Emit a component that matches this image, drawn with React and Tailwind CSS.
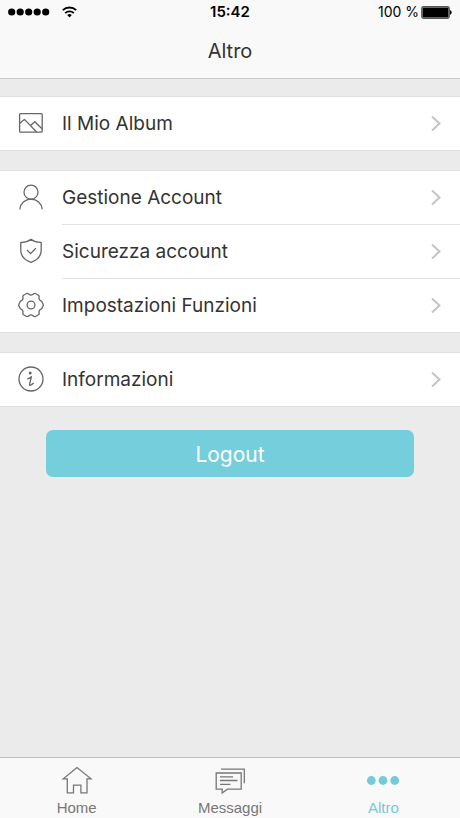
const iconProps = {
  width: 26,
  height: 26,
  viewBox: "0 0 26 26",
  fill: "none",
  stroke: "currentColor",
  strokeWidth: 1.3,
  strokeLinejoin: "round",
  "aria-hidden": true,
};

const AlbumIcon = () => (
  <svg {...iconProps}>
    <rect x="1.6" y="3.6" width="22.6" height="18.6" rx="1" />
    <path d="M1.8 13.2 6.4 9.4 18.6 22M12.6 15.4l4.2-3.6 7.2 7" />
  </svg>
);

const UserIcon = () => (
  <svg {...iconProps}>
    <circle cx="13" cy="8.2" r="7" />
    <path d="M1.7 25.4C2.4 19.2 7 15.2 13 15.2s10.6 4 11.3 10.2" />
  </svg>
);

const ShieldIcon = () => (
  <svg {...iconProps}>
    <path d="M13 1.3C10.2 3.5 6.5 4.6 2.8 4.4v7.8c0 6 3.8 9.9 10.2 12.2 6.4-2.3 10.2-6.2 10.2-12.2V4.4C19.5 4.6 15.8 3.5 13 1.3Z" />
    <path d="m9 12 3.6 3.6 5.2-5.4" />
  </svg>
);

const GearIcon = () => (
  <svg {...iconProps}>
    <path d="M5.6 3.2 8.6 1.5C9.6 1 10.3 1.5 11 2.2 12.2 3.3 13.8 3.3 15 2.2 15.7 1.5 16.4 1 17.4 1.5L20.4 3.2C21.2 3.7 21.3 4.4 21.1 5.3 20.7 7 21.5 8.3 23 8.9 23.7 9.2 24 9.7 24.2 10.3L25.1 12.2C25.4 12.8 25.4 13.2 25.1 13.8L24.2 15.7C24 16.3 23.7 16.8 23 17.1 21.5 17.7 20.7 19 21.1 20.7 21.3 21.6 21.2 22.3 20.4 22.8L17.4 24.5C16.4 25 15.7 24.5 15 23.8 13.8 22.7 12.2 22.7 11 23.8 10.3 24.5 9.6 25 8.6 24.5L5.6 22.8C4.8 22.3 4.7 21.6 4.9 20.7 5.3 19 4.5 17.7 3 17.1 2.3 16.8 2 16.3 1.8 15.7L.9 13.8C.6 13.2.6 12.8.9 12.2L1.8 10.3C2 9.7 2.3 9.2 3 8.9 4.5 8.3 5.3 7 4.9 5.3 4.7 4.4 4.8 3.7 5.6 3.2Z" />
    <circle cx="13" cy="13" r="3.9" />
  </svg>
);

const InfoIcon = () => (
  <svg {...iconProps}>
    <circle cx="13" cy="13" r="12" />
    <circle cx="12.2" cy="7" r="1.5" fill="currentColor" stroke="none" />
    <path d="M9.4 13c1.5-.3 2.8-1 4-2.200l-1.900 7.600c-.3 1.400 1.800 1.200 4.100-1.400" />
  </svg>
);

const Chevron = () => (
  <svg width="12" height="18" viewBox="0 0 12 18" fill="none" stroke="#c4c4c6" strokeWidth="2" aria-hidden="true">
    <path d="m2 1.5 7.5 7-7.5 7" />
  </svg>
);

const HomeIcon = () => (
  <svg width="32" height="30" viewBox="0 0 32 30" fill="none" stroke="currentColor" strokeWidth="1.3" aria-hidden="true">
    <path d="M16 2.5 2.3 13.8h4v14h6.2v-7.7h7.4v7.7H26v-14h4Z" />
  </svg>
);

const MessagesIcon = () => (
  <svg width="32" height="30" viewBox="0 0 32 30" fill="none" stroke="currentColor" strokeWidth="1.3" aria-hidden="true">
    <path d="M2.2 8h25v16.2H13.4L8.2 28v-3.8h-6Z" />
    <path d="M7 4.2h23.3v14M6 11.8h13M6 15.5h17.5M6 19.3h10.5" />
  </svg>
);

const MoreIcon = () => (
  <svg width="34" height="30" viewBox="0 0 34 30" fill="currentColor" aria-hidden="true">
    <circle cx="5.3" cy="15.5" r="4.4" />
    <circle cx="17" cy="15.5" r="4.4" />
    <circle cx="28.7" cy="15.5" r="4.4" />
  </svg>
);

const groups = [
  [{ label: "Il Mio Album", icon: AlbumIcon }],
  [
    { label: "Gestione Account", icon: UserIcon },
    { label: "Sicurezza account", icon: ShieldIcon },
    { label: "Impostazioni Funzioni", icon: GearIcon },
  ],
  [{ label: "Informazioni", icon: InfoIcon }],
];

const tabs = [
  { label: "Home", icon: HomeIcon },
  { label: "Messaggi", icon: MessagesIcon },
  { label: "Altro", icon: MoreIcon, active: true },
];

const StatusBar = () => (
  <div className="grid h-6 grid-cols-3 items-center px-2 text-sm text-black">
    <div className="flex items-center gap-3">
      <svg width="42" height="8" viewBox="0 0 42 8" aria-hidden="true">
        <circle cx="3.7" cy="4" r="3.6" />
        <circle cx="12.2" cy="4" r="3.6" />
        <circle cx="20.7" cy="4" r="3.6" />
        <circle cx="29.2" cy="4" r="3.6" />
        <circle cx="37.7" cy="4" r="3.6" />
      </svg>
      <svg width="15" height="12" viewBox="0 0 15 12" fill="none" stroke="#000" strokeWidth="1.8" aria-hidden="true">
        <path d="M.8 4.2a9.600 9.600 0 0 1 13.400 0M3.200 7.100a6.200 6.200 0 0 1 8.600 0" />
        <path d="M5.2 9a3.400 3.400 0 0 1 4.600 0L7.500 11.600Z" fill="#000" stroke="none" />
      </svg>
    </div>
    <span className="text-center text-[15px] font-semibold">15:42</span>
    <div className="flex items-center justify-end gap-0.5">
      <span>100 %</span>
      <svg width="31" height="13" viewBox="0 0 31 13" aria-hidden="true">
        <rect x=".7" y=".7" width="27.6" height="11.6" rx="1.8" fill="none" stroke="#555" strokeWidth="1.2" />
        <rect x="1.5" y="1.5" width="26" height="10" rx=".5" />
        <path d="M29 4.300c2.200.6 2.200 3.800 0 4.400Z" />
      </svg>
    </div>
  </div>
);

const MenuRow = ({ label, icon: Icon }) => (
  <li className="group">
    <button type="button" className="flex w-full items-center pl-[18px] text-left">
      <span className="pb-0.5 text-[#666]">
        <Icon />
      </span>
      <span className="ml-[18px] flex h-[54px] flex-1 items-center justify-between border-b border-[#e3e3e3] pr-[18px] text-[19px] text-[#333] group-last:h-[53px] group-last:border-b-0">
        <span className="pt-0.5">{label}</span>
        <Chevron />
      </span>
    </button>
  </li>
);

const App = () => (
  <div className="flex min-h-screen flex-col bg-[#ebebeb] font-['Inter','Liberation_Sans',sans-serif]">
    <header className="border-b border-[#c8c8c8] bg-[#f9f9f9]">
      <StatusBar />
      <h1 className="flex h-[54px] items-center justify-center text-xl text-[#333]">Altro</h1>
    </header>

    <main className="flex-1 pt-[17px]">
      <div className="flex flex-col gap-[19px]">
        {groups.map((items) => (
          <ul key={items[0].label} className="border-y border-[#e0e0e0] bg-white">
            {items.map((item) => (
              <MenuRow key={item.label} {...item} />
            ))}
          </ul>
        ))}
      </div>
      <div className="mt-[23px] px-[46px]">
        <button type="button" className="h-[47px] w-full rounded-[7px] bg-[#74cedb] pt-0.5 text-[21px] text-white">
          Logout
        </button>
      </div>
    </main>

    <nav className="grid grid-cols-3 border-t border-[#c0c0c0] bg-[#f9f9f9] font-['Liberation_Sans',Arial,sans-serif]">
      {tabs.map(({ label, icon: Icon, active }) => (
        <button
          key={label}
          type="button"
          aria-current={active ? "page" : undefined}
          className={`flex flex-col items-center gap-0.5 pt-[7px] text-[15px] leading-[21px] ${active ? "text-[#74cad8]" : "text-[#777]"}`}
        >
          <Icon />
          {label}
        </button>
      ))}
    </nav>
  </div>
);

export default App;
